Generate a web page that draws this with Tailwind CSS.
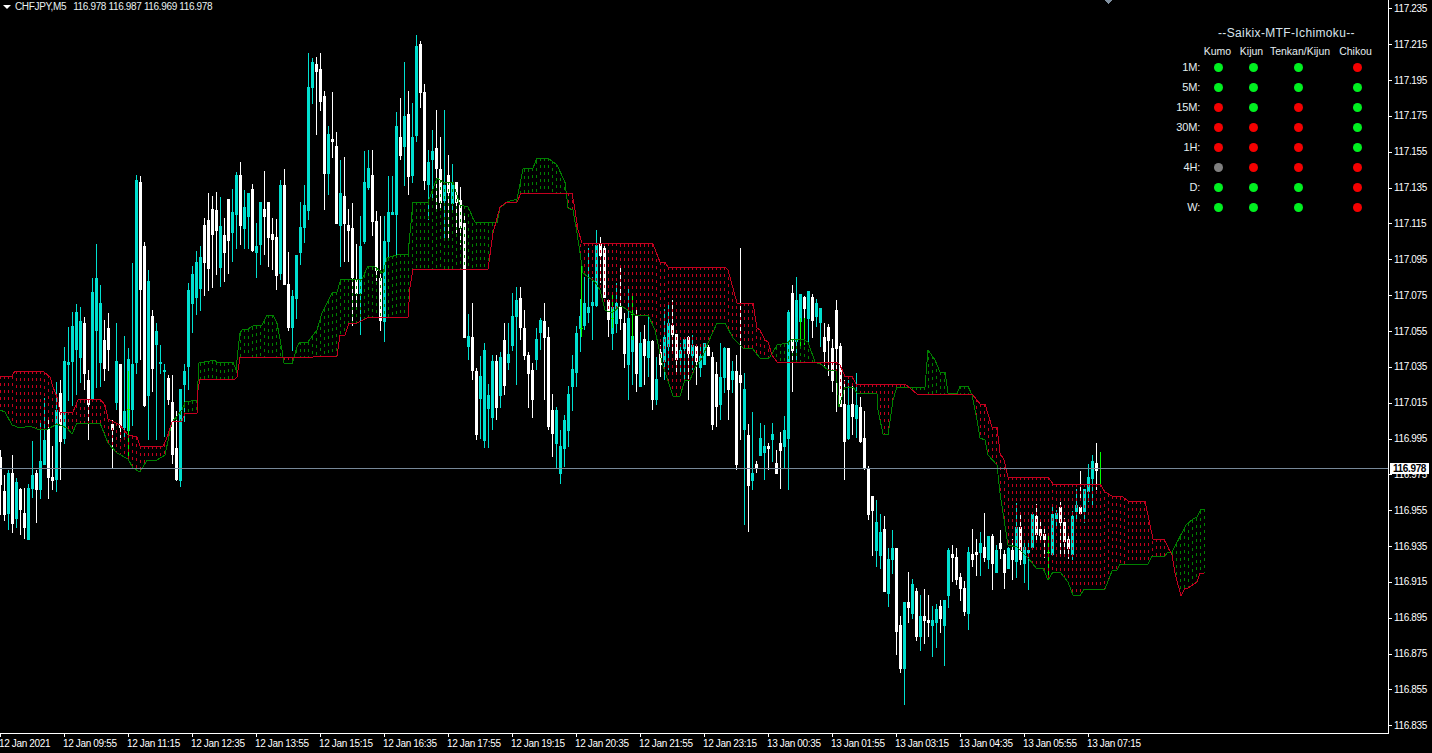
<!DOCTYPE html>
<html lang="en">
<head>
<meta charset="UTF-8">
<title>CHFJPY,M5</title>
<script src="https://cdn.jsdelivr.net/npm/@tailwindcss/browser@4"></script>
</head>
<body class="w-screen h-screen overflow-hidden bg-black text-white font-['Liberation_Sans',sans-serif] text-[10px] tracking-[-0.35px] leading-none">

<div class="flex h-[733px]">
  <!-- chart -->
  <div class="relative w-[1388px] h-full overflow-hidden">
    <svg id="chart" class="block" width="1388" height="733" shape-rendering="crispEdges"></svg>

    <!-- symbol line -->
    <div class="absolute top-[2px] left-[3px] flex items-center h-[9px] text-[#e8f0f0]">
      <span class="w-0 h-0 border-x-[4px] border-x-transparent border-t-[4px] border-t-white mr-[4px]"></span>
      <span class="mr-[7px]">CHFJPY,M5</span>
      <span>116.978 116.987 116.969 116.978</span>
    </div>

    <!-- indicator panel -->
    <div class="absolute top-[27px] left-[1160px] w-[228px] text-[#e4eef0] text-[11px] tracking-[-0.2px]">
      <div class="pl-[58px] h-[14px] text-[12px] tracking-[0.36px] text-[#d8e4ec]">--Saikix-MTF-Ichimoku--</div>
      <div class="grid grid-cols-[41px_33px_35px_62px_49px] items-center justify-items-center mt-[4px] h-[12px] text-[10.5px] tracking-normal">
        <span></span><span>Kumo</span><span>Kijun</span><span>Tenkan/Kijun</span><span>Chikou</span>
      </div>
      <div class="grid grid-cols-[41px_35px_35px_55px_62px] grid-rows-[repeat(8,20px)] items-center justify-items-center">
        <span class="justify-self-end pr-[1px]">1M:</span><i class="w-[9px] h-[9px] rounded-full bg-[#00f020]"></i><i class="w-[9px] h-[9px] rounded-full bg-[#00f020]"></i><i class="w-[9px] h-[9px] rounded-full bg-[#00f020]"></i><i class="w-[9px] h-[9px] rounded-full bg-[#f40000]"></i>
        <span class="justify-self-end pr-[1px]">5M:</span><i class="w-[9px] h-[9px] rounded-full bg-[#00f020]"></i><i class="w-[9px] h-[9px] rounded-full bg-[#00f020]"></i><i class="w-[9px] h-[9px] rounded-full bg-[#00f020]"></i><i class="w-[9px] h-[9px] rounded-full bg-[#00f020]"></i>
        <span class="justify-self-end pr-[1px]">15M:</span><i class="w-[9px] h-[9px] rounded-full bg-[#f40000]"></i><i class="w-[9px] h-[9px] rounded-full bg-[#00f020]"></i><i class="w-[9px] h-[9px] rounded-full bg-[#f40000]"></i><i class="w-[9px] h-[9px] rounded-full bg-[#00f020]"></i>
        <span class="justify-self-end pr-[1px]">30M:</span><i class="w-[9px] h-[9px] rounded-full bg-[#f40000]"></i><i class="w-[9px] h-[9px] rounded-full bg-[#f40000]"></i><i class="w-[9px] h-[9px] rounded-full bg-[#f40000]"></i><i class="w-[9px] h-[9px] rounded-full bg-[#00f020]"></i>
        <span class="justify-self-end pr-[1px]">1H:</span><i class="w-[9px] h-[9px] rounded-full bg-[#f40000]"></i><i class="w-[9px] h-[9px] rounded-full bg-[#f40000]"></i><i class="w-[9px] h-[9px] rounded-full bg-[#f40000]"></i><i class="w-[9px] h-[9px] rounded-full bg-[#00f020]"></i>
        <span class="justify-self-end pr-[1px]">4H:</span><i class="w-[9px] h-[9px] rounded-full bg-[#808080]"></i><i class="w-[9px] h-[9px] rounded-full bg-[#f40000]"></i><i class="w-[9px] h-[9px] rounded-full bg-[#f40000]"></i><i class="w-[9px] h-[9px] rounded-full bg-[#f40000]"></i>
        <span class="justify-self-end pr-[1px]">D:</span><i class="w-[9px] h-[9px] rounded-full bg-[#00f020]"></i><i class="w-[9px] h-[9px] rounded-full bg-[#00f020]"></i><i class="w-[9px] h-[9px] rounded-full bg-[#00f020]"></i><i class="w-[9px] h-[9px] rounded-full bg-[#f40000]"></i>
        <span class="justify-self-end pr-[1px]">W:</span><i class="w-[9px] h-[9px] rounded-full bg-[#00f020]"></i><i class="w-[9px] h-[9px] rounded-full bg-[#00f020]"></i><i class="w-[9px] h-[9px] rounded-full bg-[#00f020]"></i><i class="w-[9px] h-[9px] rounded-full bg-[#f40000]"></i>
      </div>
    </div>
  </div>

  <!-- price axis -->
  <div class="relative w-[44px] h-full border-l border-white overflow-hidden">
    <div class="flex flex-col mt-[-9px]">
      <div class="flex items-center h-[35.85px]"><i class="w-[3px] h-px bg-white mr-[2px]"></i>117.235</div>
      <div class="flex items-center h-[35.85px]"><i class="w-[3px] h-px bg-white mr-[2px]"></i>117.215</div>
      <div class="flex items-center h-[35.85px]"><i class="w-[3px] h-px bg-white mr-[2px]"></i>117.195</div>
      <div class="flex items-center h-[35.85px]"><i class="w-[3px] h-px bg-white mr-[2px]"></i>117.175</div>
      <div class="flex items-center h-[35.85px]"><i class="w-[3px] h-px bg-white mr-[2px]"></i>117.155</div>
      <div class="flex items-center h-[35.85px]"><i class="w-[3px] h-px bg-white mr-[2px]"></i>117.135</div>
      <div class="flex items-center h-[35.85px]"><i class="w-[3px] h-px bg-white mr-[2px]"></i>117.115</div>
      <div class="flex items-center h-[35.85px]"><i class="w-[3px] h-px bg-white mr-[2px]"></i>117.095</div>
      <div class="flex items-center h-[35.85px]"><i class="w-[3px] h-px bg-white mr-[2px]"></i>117.075</div>
      <div class="flex items-center h-[35.85px]"><i class="w-[3px] h-px bg-white mr-[2px]"></i>117.055</div>
      <div class="flex items-center h-[35.85px]"><i class="w-[3px] h-px bg-white mr-[2px]"></i>117.035</div>
      <div class="flex items-center h-[35.85px]"><i class="w-[3px] h-px bg-white mr-[2px]"></i>117.015</div>
      <div class="flex items-center h-[35.85px]"><i class="w-[3px] h-px bg-white mr-[2px]"></i>116.995</div>
      <div class="flex items-center h-[35.85px]"><i class="w-[3px] h-px bg-white mr-[2px]"></i>116.975</div>
      <div class="flex items-center h-[35.85px]"><i class="w-[3px] h-px bg-white mr-[2px]"></i>116.955</div>
      <div class="flex items-center h-[35.85px]"><i class="w-[3px] h-px bg-white mr-[2px]"></i>116.935</div>
      <div class="flex items-center h-[35.85px]"><i class="w-[3px] h-px bg-white mr-[2px]"></i>116.915</div>
      <div class="flex items-center h-[35.85px]"><i class="w-[3px] h-px bg-white mr-[2px]"></i>116.895</div>
      <div class="flex items-center h-[35.85px]"><i class="w-[3px] h-px bg-white mr-[2px]"></i>116.875</div>
      <div class="flex items-center h-[35.85px]"><i class="w-[3px] h-px bg-white mr-[2px]"></i>116.855</div>
      <div class="flex items-center h-[35.85px]"><i class="w-[3px] h-px bg-white mr-[2px]"></i>116.835</div>
    </div>
    <!-- current price tag -->
    <div class="absolute top-[463px] left-[1px] w-[39px] h-[11px] bg-white text-black font-semibold flex items-center justify-center">116.978</div>
  </div>
</div>

<!-- time axis -->
<div class="flex w-[1389px] h-[20px] border-t border-white">
  <div class="w-[64px] shrink-0"><i class="block w-px h-[3px] bg-white"></i><span class="block mt-[2px] ml-[-1px]">12 Jan 2021</span></div>
  <div class="w-[64px] shrink-0"><i class="block w-px h-[3px] bg-white"></i><span class="block mt-[2px] ml-[-1px]">12 Jan 09:55</span></div>
  <div class="w-[64px] shrink-0"><i class="block w-px h-[3px] bg-white"></i><span class="block mt-[2px] ml-[-1px]">12 Jan 11:15</span></div>
  <div class="w-[64px] shrink-0"><i class="block w-px h-[3px] bg-white"></i><span class="block mt-[2px] ml-[-1px]">12 Jan 12:35</span></div>
  <div class="w-[64px] shrink-0"><i class="block w-px h-[3px] bg-white"></i><span class="block mt-[2px] ml-[-1px]">12 Jan 13:55</span></div>
  <div class="w-[64px] shrink-0"><i class="block w-px h-[3px] bg-white"></i><span class="block mt-[2px] ml-[-1px]">12 Jan 15:15</span></div>
  <div class="w-[64px] shrink-0"><i class="block w-px h-[3px] bg-white"></i><span class="block mt-[2px] ml-[-1px]">12 Jan 16:35</span></div>
  <div class="w-[64px] shrink-0"><i class="block w-px h-[3px] bg-white"></i><span class="block mt-[2px] ml-[-1px]">12 Jan 17:55</span></div>
  <div class="w-[64px] shrink-0"><i class="block w-px h-[3px] bg-white"></i><span class="block mt-[2px] ml-[-1px]">12 Jan 19:15</span></div>
  <div class="w-[64px] shrink-0"><i class="block w-px h-[3px] bg-white"></i><span class="block mt-[2px] ml-[-1px]">12 Jan 20:35</span></div>
  <div class="w-[64px] shrink-0"><i class="block w-px h-[3px] bg-white"></i><span class="block mt-[2px] ml-[-1px]">12 Jan 21:55</span></div>
  <div class="w-[64px] shrink-0"><i class="block w-px h-[3px] bg-white"></i><span class="block mt-[2px] ml-[-1px]">12 Jan 23:15</span></div>
  <div class="w-[64px] shrink-0"><i class="block w-px h-[3px] bg-white"></i><span class="block mt-[2px] ml-[-1px]">13 Jan 00:35</span></div>
  <div class="w-[64px] shrink-0"><i class="block w-px h-[3px] bg-white"></i><span class="block mt-[2px] ml-[-1px]">13 Jan 01:55</span></div>
  <div class="w-[64px] shrink-0"><i class="block w-px h-[3px] bg-white"></i><span class="block mt-[2px] ml-[-1px]">13 Jan 03:15</span></div>
  <div class="w-[64px] shrink-0"><i class="block w-px h-[3px] bg-white"></i><span class="block mt-[2px] ml-[-1px]">13 Jan 04:35</span></div>
  <div class="w-[64px] shrink-0"><i class="block w-px h-[3px] bg-white"></i><span class="block mt-[2px] ml-[-1px]">13 Jan 05:55</span></div>
  <div class="w-[64px] shrink-0"><i class="block w-px h-[3px] bg-white"></i><span class="block mt-[2px] ml-[-1px]">13 Jan 07:15</span></div>
</div>

<script>
// kumo lines, [x, y] pairs read off the chart
var lineA = [[0,376],[12,376],[15,371],[43,371],[50,377],[53,387],[57,397],[60,412],[73,412],[78,400],[100,399],[105,405],[108,419],[120,425],[128,435],[137,437],[140,446],[163,446],[166,440],[172,422],[182,421],[185,413],[197,413],[198,390],[200,379],[235,379],[237,377],[240,357],[313,357],[337,356],[340,335],[345,335],[349,323],[357,323],[367,318],[408,317],[410,287],[413,269],[488,269],[493,233],[500,207],[507,202],[517,202],[521,193],[572,193],[575,210],[578,230],[582,243],[653,244],[660,262],[665,262],[668,267],[725,267],[728,270],[737,303],[753,303],[757,328],[760,330],[765,340],[768,342],[772,355],[777,362],[837,362],[840,365],[845,376],[852,376],[856,384],[905,384],[917,394],[972,394],[977,400],[980,404],[985,404],[992,427],[997,427],[1000,453],[1004,460],[1008,477],[1048,477],[1053,484],[1100,484],[1105,492],[1112,496],[1123,497],[1128,501],[1145,501],[1153,539],[1164,539],[1172,555],[1175,573],[1181,596],[1185,588],[1188,588],[1197,582],[1200,573],[1204,573]];
var lineB = [[0,410],[5,412],[12,425],[20,428],[30,426],[37,429],[48,429],[57,424],[67,428],[72,434],[77,423],[100,423],[108,443],[117,453],[128,459],[133,468],[140,472],[147,460],[157,460],[165,455],[172,422],[182,410],[185,402],[197,400],[199,363],[215,360],[217,363],[233,362],[236,370],[238,350],[240,333],[243,329],[248,329],[253,326],[262,325],[267,315],[273,315],[277,323],[282,350],[284,363],[292,364],[297,347],[300,342],[308,342],[317,330],[322,313],[332,293],[337,292],[341,279],[362,279],[368,266],[375,267],[383,273],[387,258],[400,254],[408,254],[413,202],[428,202],[437,178],[443,182],[453,182],[460,205],[468,207],[475,222],[497,223],[500,208],[507,202],[517,199],[523,169],[533,168],[537,158],[548,158],[557,165],[565,182],[568,208],[573,210],[577,233],[583,273],[595,282],[600,290],[605,310],[612,313],[620,306],[623,307],[635,315],[648,315],[655,330],[662,363],[673,396],[680,396],[685,380],[690,380],[695,368],[702,358],[708,343],[717,323],[725,323],[733,338],[743,348],[753,349],[755,352],[760,358],[767,359],[770,357],[777,345],[787,343],[792,339],[803,339],[808,342],[815,362],[822,365],[828,370],[836,371],[839,407],[845,387],[853,387],[857,393],[877,394],[878,410],[883,434],[888,435],[893,400],[897,387],[925,387],[928,350],[935,360],[940,372],[945,372],[948,393],[957,394],[960,386],[968,386],[972,395],[977,420],[980,438],[985,440],[988,455],[997,465],[1000,493],[1008,545],[1017,547],[1028,558],[1037,569],[1043,568],[1048,580],[1053,572],[1060,572],[1068,582],[1073,595],[1080,596],[1084,589],[1105,589],[1112,571],[1117,570],[1120,564],[1148,564],[1152,556],[1165,556],[1168,552],[1172,552],[1186,525],[1193,519],[1197,517],[1201,509],[1204,509]];

// rough high/low of the bars, used where a bar has no reading of its own
var env = [[0,455,515],[16,475,535],[32,470,520],[40,450,495],[48,400,480],[56,385,470],[64,340,440],[72,310,420],[80,290,400],[88,330,420],[96,220,390],[104,310,390],[112,310,430],[120,330,440],[128,340,470],[136,175,360],[144,235,370],[152,300,400],[160,340,420],[168,380,470],[176,400,485],[184,300,400],[192,260,340],[200,235,320],[208,185,300],[216,170,280],[224,200,300],[232,190,250],[240,150,230],[304,120,220],[328,95,210],[352,220,335],[368,150,320],[384,150,270],[392,110,210],[408,55,170],[420,37,110],[432,125,220],[448,165,255],[464,230,350],[472,300,440],[480,340,450],[488,370,450],[496,350,420],[504,330,400],[512,290,380],[528,340,410],[536,350,430],[544,320,400],[552,380,470],[560,430,495],[568,380,450],[576,320,390],[584,260,340],[608,290,350],[640,330,400],[712,350,430],[736,370,470],[744,410,525],[752,400,540],[768,430,470],[784,320,470],[792,265,400],[800,285,350],[816,295,335],[832,330,400],[840,345,440],[856,400,440],[864,440,490],[872,490,560],[884,516,592]];

// bars read one by one: x, high, low, body top, body bottom, colour (0 = not readable)
var bars = [
[0,450,0,457,485,'w'],[4,475,521,491,515,'w'],[8,470,530,473,514,'c'],[12,455,533,473,524,'w'],[16,478,528,482,519,'c'],[20,488,535,489,510,'w'],[24,488,539,513,528,'w'],[28,484,540,488,540,'c'],[32,441,498,475,489,'c'],[36,470,523,473,490,'w'],[40,421,499,461,490,'c'],[44,398,465,440,465,'c'],[48,418,499,429,478,'w'],[52,446,490,477,481,'w'],[56,382,492,410,480,'c'],[60,380,480,393,442,'w'],[64,0,444,361,439,'c'],[68,0,401,362,365,'c'],[72,0,406,0,362,'c'],[76,0,395,0,350,'c'],[84,0,390,0,374,'w'],[88,370,440,380,405,'w'],[92,0,400,0,400,'c'],[108,0,371,0,350,'w'],[112,420,469,424,430,'w'],[116,0,410,361,403,'c'],[120,364,438,364,428,'w'],[124,0,440,411,428,'c'],[132,0,426,364,410,'c'],[136,175,374,180,363,'c'],[140,176,360,182,290,'w'],[144,0,407,0,406,'w'],[148,0,440,0,396,'c'],[156,0,440,0,345,'c'],[160,0,374,0,360,'c'],[164,0,437,0,360,'c'],[168,375,405,378,400,'w'],[172,375,464,402,455,'w'],[176,411,481,448,480,'w'],[180,389,487,389,481,'c'],[184,364,422,371,385,'c'],[188,0,390,0,367,'c'],
[232,189,262,212,233,'c'],[236,172,249,175,215,'c'],[240,162,245,175,226,'w'],[244,190,249,207,229,'c'],[248,193,249,193,217,'c'],[252,184,252,189,251,'w'],[256,223,278,246,253,'c'],[260,202,265,202,245,'c'],[264,171,255,209,217,'w'],[268,202,267,202,238,'w'],[272,218,270,234,240,'w'],[276,219,290,237,276,'w'],[280,180,280,185,274,'c'],[284,169,285,185,285,'w'],[288,252,331,284,328,'w'],[292,290,351,296,328,'c'],[296,255,319,255,299,'c'],[300,202,265,227,253,'c'],[304,185,243,205,228,'c'],
[308,53,220,87,211,'c'],[312,58,104,62,88,'c'],[316,57,135,64,72,'w'],[320,53,111,69,102,'w'],[324,91,210,96,174,'w'],[328,126,195,134,174,'c'],[332,92,158,139,142,'w'],[336,132,224,146,224,'w'],[340,160,267,193,226,'c'],[344,157,262,196,224,'w'],[348,209,262,225,231,'w'],[352,203,326,228,278,'w'],[356,244,308,280,294,'w'],[360,216,335,246,294,'c'],[364,151,244,182,242,'c'],[368,150,190,168,188,'c'],[372,150,236,175,222,'w'],[376,211,281,221,271,'w'],[380,216,331,278,321,'w'],[384,216,342,241,322,'c'],[388,176,258,212,242,'c'],[392,176,215,212,215,'c'],
[396,112,257,126,215,'c'],[400,98,160,137,156,'w'],[404,62,186,116,147,'c'],[408,91,195,114,177,'w'],[412,103,183,137,176,'c'],[416,35,142,46,136,'c'],[420,41,108,44,93,'w'],[424,84,190,92,181,'w'],[428,150,220,162,185,'c'],[432,130,200,151,160,'c'],[436,110,210,148,169,'w'],[440,137,209,169,203,'w'],[444,110,240,185,201,'c'],[448,155,241,175,193,'w'],[452,164,213,183,204,'c'],[456,183,233,182,203,'w'],[460,187,245,200,228,'w'],[464,215,338,223,338,'w'],[468,314,360,336,347,'c'],[472,303,380,337,371,'w'],[476,368,440,371,435,'w'],
[484,343,0,350,0,'c'],[492,355,0,361,0,'c'],[496,355,0,361,0,'w'],[500,352,0,357,0,'c'],[504,323,0,340,0,'w'],[508,323,370,354,363,'c'],[512,293,351,316,346,'c'],[516,287,0,300,317,'c'],[520,287,340,298,328,'w'],[524,310,360,328,356,'w'],[528,352,0,355,374,'w'],[532,363,0,370,400,'w'],[536,328,370,339,360,'c'],[540,318,350,320,333,'c'],[544,303,400,321,338,'w'],[548,327,0,337,0,'w'],
[584,277,330,303,326,'c'],[588,248,323,307,313,'c'],[592,277,340,302,306,'c'],[596,230,307,245,306,'c'],[600,237,283,243,256,'w'],[604,243,298,248,298,'w'],[608,300,337,300,320,'w'],[616,283,333,303,324,'c'],[620,266,330,306,319,'w'],[624,313,368,323,354,'w'],[628,289,400,318,365,'c'],[636,310,392,316,374,'w'],[640,332,387,343,387,'c'],[644,325,385,339,356,'w'],[648,315,377,341,358,'c'],[652,340,410,341,400,'w'],[656,357,405,379,400,'c'],[660,345,377,352,365,'w'],[664,309,380,337,362,'c'],[668,305,370,323,347,'c'],[672,300,353,325,335,'w'],[676,334,374,334,360,'w'],[680,343,373,350,358,'c'],[684,337,380,339,349,'c'],[688,336,400,337,354,'w'],[692,335,370,345,356,'c'],[696,345,385,346,362,'w'],[700,347,377,356,368,'c'],[704,343,365,343,365,'c'],[708,345,356,347,356,'w'],[712,352,430,357,425,'w'],[720,343,420,377,405,'c'],[724,347,393,348,378,'c'],[728,348,420,348,390,'w'],[732,361,393,371,380,'c'],[736,355,470,371,465,'w'],[740,248,440,375,383,'w'],[744,373,525,389,430,'c'],
[752,412,490,473,481,'c'],[756,461,473,464,469,'w'],[760,423,455,438,456,'c'],[764,425,480,446,453,'c'],[768,443,470,446,449,'w'],[772,423,462,434,440,'c'],[776,450,474,463,474,'w'],[780,432,489,443,451,'w'],[784,416,468,430,447,'c'],[788,310,490,312,439,'c'],[836,300,412,310,349,'w'],[840,343,407,346,407,'w'],[844,380,480,404,442,'w'],[848,380,440,405,439,'c'],[852,385,435,404,417,'w'],[856,373,438,405,419,'c'],[860,397,443,407,442,'w'],[864,411,470,438,469,'w'],[868,466,520,468,515,'w'],
[884,516,592,529,592,'w'],[888,548,607,559,594,'c'],[892,530,574,548,560,'c'],[896,548,655,548,632,'w'],[900,616,673,625,669,'w'],[904,602,705,602,669,'c'],[908,572,623,602,608,'w'],[912,579,619,584,614,'c'],[916,588,641,591,637,'w'],[920,595,651,616,637,'c'],[924,589,644,616,621,'w'],[928,595,637,620,623,'w'],[932,606,657,620,626,'c'],[936,604,648,609,623,'c'],[940,600,633,606,619,'w'],[944,600,666,600,626,'c'],[948,548,608,550,596,'c'],[952,545,582,554,558,'w'],[956,548,585,557,580,'w'],[960,573,601,577,589,'w'],[964,581,616,588,612,'w'],[968,547,630,552,614,'c'],[972,529,567,554,560,'w'],[976,539,576,552,555,'w'],[980,532,576,543,553,'c'],[984,513,562,547,558,'w'],[988,536,569,536,560,'c'],[992,534,590,536,564,'w'],[996,545,573,550,573,'c'],[1000,530,559,543,549,'w'],[1004,550,589,554,573,'w'],[1008,547,569,548,569,'c'],[1012,539,580,550,560,'w'],[1016,503,578,527,562,'c'],[1020,515,565,527,560,'w'],[1024,540,583,547,564,'c'],[1028,540,590,550,553,'c'],[1032,512,548,514,548,'c'],[1036,504,540,516,535,'w'],[1040,521,540,529,536,'w'],[1044,529,558,534,540,'w'],[1052,507,555,514,555,'c'],[1056,510,528,513,519,'c'],[1060,502,555,507,523,'w'],[1064,518,555,522,542,'w'],[1068,535,559,539,549,'w'],[1072,511,560,516,555,'c'],[1076,489,520,505,512,'c'],[1080,471,500,507,514,'w'],[1084,489,523,489,512,'c'],[1088,464,502,477,492,'c'],[1092,455,508,461,479,'c'],[1096,443,490,463,471,'w']
];

var seed = 7;
function rnd() { seed = (seed * 16807) % 2147483647; return seed / 2147483647; }

function lerp(pts, x, col) {
  for (var i = 1; i < pts.length; i++) {
    if (x <= pts[i][0]) {
      var a = pts[i - 1], b = pts[i];
      return a[col] + (b[col] - a[col]) * (x - a[0]) / (b[0] - a[0]);
    }
  }
  return pts[pts.length - 1][col];
}

var known = {};
bars.forEach(function (b) { known[b[0]] = b; });

var wicks = { w: '', c: '' }, bodies = { w: '', c: '' };
for (var x = 0; x <= 1096; x += 4) {
  if (x == 1048) continue;
  var H = lerp(env, x, 1), L = lerp(env, x, 2), b = known[x];
  var hi, lo, bt, bb, col;
  if (b) {
    hi = b[1] || H + rnd() * 8;
    lo = b[2] || L - rnd() * 8;
    bt = b[3] || hi + 3 + rnd() * 15;
    bb = b[4] || lo - 3 - rnd() * 10;
    col = b[5];
  } else {
    var span = L - H;
    hi = H + rnd() * 0.2 * span;
    lo = L - rnd() * 0.2 * span;
    bt = hi + rnd() * 0.35 * (lo - hi);
    bb = bt + (0.25 + 0.5 * rnd()) * (lo - bt);
    col = rnd() < 0.5 ? 'w' : 'c';
  }
  hi = Math.round(hi); lo = Math.round(lo); bt = Math.round(bt); bb = Math.max(Math.round(bb), bt + 2);
  wicks[col] += 'M' + (x + 0.5) + ' ' + hi + 'V' + lo;
  bodies[col] += 'M' + (x - 1) + ' ' + bt + 'H' + (x + 2) + 'V' + bb + 'H' + (x - 1) + 'Z';
}

var s = '';
s += '<path d="' + wicks.c + '" stroke="#00e0d0" fill="none"/><path d="' + bodies.c + '" fill="#00e0d0"/>';
s += '<path d="' + wicks.w + '" stroke="#ffffff" fill="none"/><path d="' + bodies.w + '" fill="#ffffff"/>';

// chikou bits
[[128,371,458,409],[581,264,337,328],[612,295,328,318],[632,295,340,314],[800,318,347,0],[804,318,345,0],[1048,534,575,552],[1100,452,484,468]].forEach(function (l) {
  s += '<path d="M' + (l[0] + 0.5) + ' ' + l[1] + 'V' + l[2] + (l[3] ? 'M' + (l[0] - 1) + ' ' + (l[3] + 0.5) + 'H' + (l[0] + 2) : '') + '" stroke="#00ff00" fill="none"/>';
});

// kumo hatching, one dashed column per bar
var RED = '#c4001f', GREEN = '#008000';
var red = '', green = '';
for (var x = 0; x <= 1204; x += 4) {
  var ya = lerp(lineA, x, 1), yb = lerp(lineB, x, 1);
  if (Math.abs(ya - yb) < 2) continue;
  var seg = 'M' + (x + 0.5) + ' ' + Math.round(Math.min(ya, yb)) + 'V' + Math.round(Math.max(ya, yb));
  if (ya < yb) red += seg; else green += seg;
}
s += '<path d="' + red + '" stroke="' + RED + '" stroke-dasharray="3 4" fill="none"/>';
s += '<path d="' + green + '" stroke="' + GREEN + '" stroke-dasharray="3 4" fill="none"/>';
function poly(p) { return p.map(function (q) { return q.join(','); }).join(' '); }
s += '<polyline points="' + poly(lineB) + '" stroke="' + GREEN + '" fill="none"/>';
s += '<polyline points="' + poly(lineA) + '" stroke="' + RED + '" fill="none"/>';

// bid line and the little marker on the top edge
s += '<path d="M0 468.5H1388" stroke="#778899"/>';
s += '<polygon points="1104,0 1112,0 1108,4" fill="#8090a0"/>';

document.getElementById('chart').innerHTML = s;
</script>
</body>
</html>
